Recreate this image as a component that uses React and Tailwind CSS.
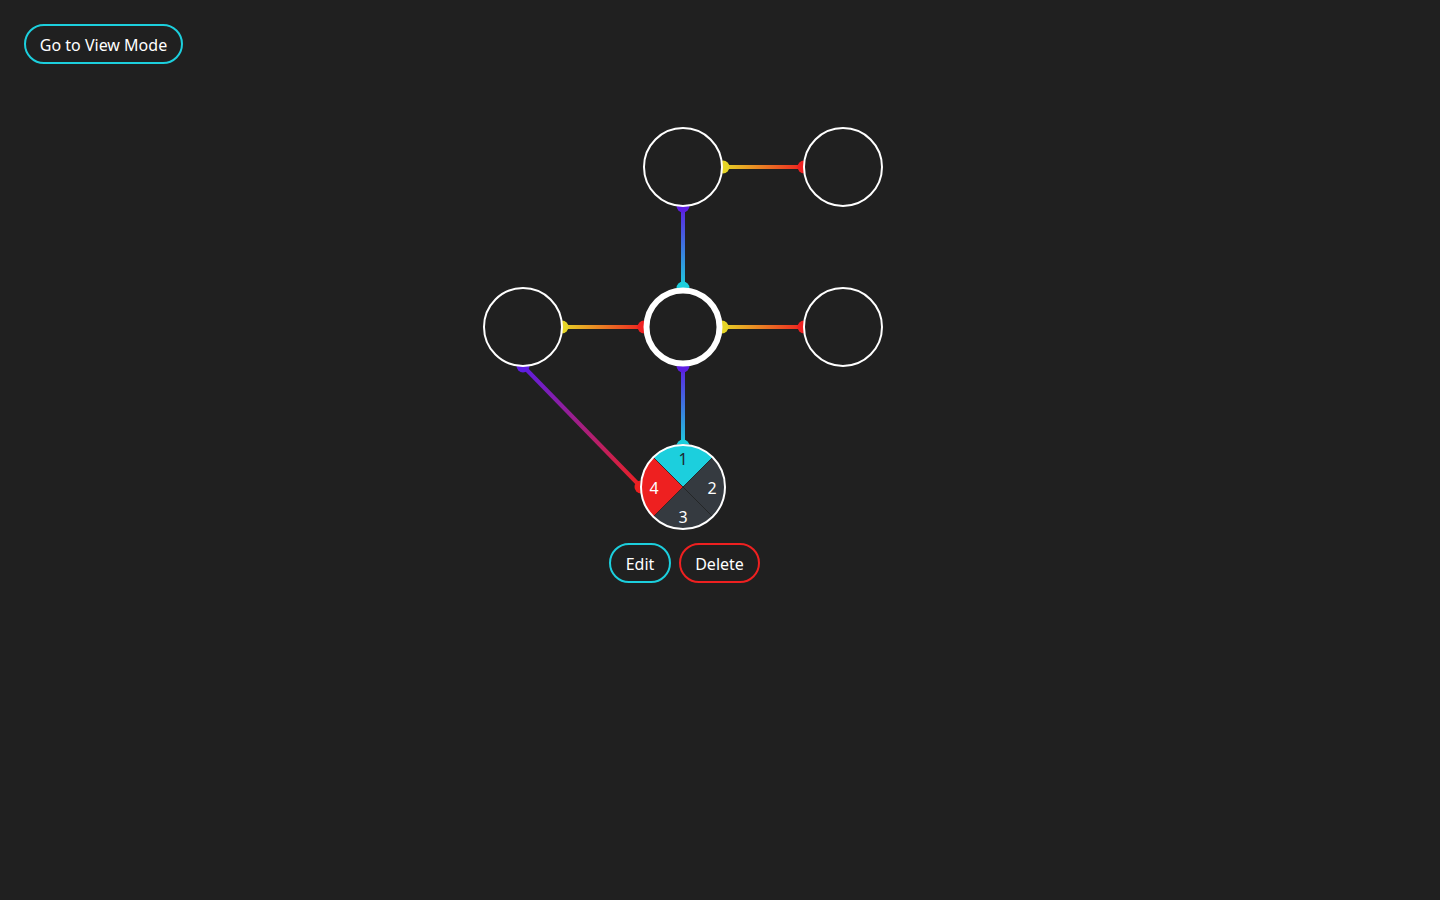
import React from 'react';

const CYAN = '#1ccfdd';
const RED = '#ee2020';
const YELLOW = '#e6d526';
const PURPLE = '#5d1de2';
const SLATE = '#353a40';
const BG = '#202020';
const FONT = '"Noto Sans", "Open Sans", sans-serif';

// plain nodes of the graph, centers in page px
const nodes = [
  { id: 'a', x: 683, y: 167 },
  { id: 'b', x: 843, y: 167 },
  { id: 'c', x: 523, y: 327 },
  { id: 'd', x: 843, y: 327 },
];

const edges = [
  { id: 'e1', x1: 723, y1: 167, x2: 804, y2: 167, from: YELLOW, to: RED },
  { id: 'e2', x1: 562, y1: 327, x2: 644, y2: 327, from: YELLOW, to: RED },
  { id: 'e3', x1: 722, y1: 327, x2: 804, y2: 327, from: YELLOW, to: RED },
  { id: 'e4', x1: 683, y1: 206, x2: 683, y2: 288, from: PURPLE, to: CYAN },
  { id: 'e5', x1: 683, y1: 366, x2: 683, y2: 446, from: PURPLE, to: CYAN },
  { id: 'e6', x1: 523, y1: 366, x2: 641, y2: 487, from: PURPLE, to: RED },
];

const Sectors = ({ cx, cy, r }) => {
  const d = Math.round(r * Math.SQRT1_2);
  const tl = `${cx - d},${cy - d}`;
  const tr = `${cx + d},${cy - d}`;
  const br = `${cx + d},${cy + d}`;
  const bl = `${cx - d},${cy + d}`;
  const arc = (p) => `A${r},${r} 0 0 1 ${p}`;

  return (
    <g fontFamily={FONT} fontSize="16" textAnchor="middle">
      <path d={`M${cx},${cy} L${tl} ${arc(tr)} Z`} fill={CYAN} stroke={BG} strokeWidth="0.6" />
      <path d={`M${cx},${cy} L${tr} ${arc(br)} Z`} fill={SLATE} stroke={BG} strokeWidth="0.6" />
      <path d={`M${cx},${cy} L${br} ${arc(bl)} Z`} fill={SLATE} stroke={BG} strokeWidth="0.6" />
      <path d={`M${cx},${cy} L${bl} ${arc(tl)} Z`} fill={RED} stroke={BG} strokeWidth="0.6" />
      <circle cx={cx} cy={cy} r={r} fill="none" stroke="#ffffff" strokeWidth="2" />
      <text x={cx} y={cy - 22} fill="#1e2a30">1</text>
      <text x={cx + 29} y={cy + 7} fill="#ffffff">2</text>
      <text x={cx} y={cy + 36} fill="#ffffff">3</text>
      <text x={cx - 29} y={cy + 7} fill="#ffffff">4</text>
    </g>
  );
};

export default function App() {
  return (
    <div className="relative w-full h-[900px] bg-[#202020] overflow-hidden text-white font-['Noto_Sans','Open_Sans',sans-serif]">
      <svg className="absolute inset-0 w-full h-full" width="1440" height="900">
        <defs>
          {edges.map((e) => (
            <linearGradient
              key={e.id}
              id={`g-${e.id}`}
              gradientUnits="userSpaceOnUse"
              x1={e.x1}
              y1={e.y1}
              x2={e.x2}
              y2={e.y2}
            >
              <stop offset="0" stopColor={e.from} />
              <stop offset="1" stopColor={e.to} />
            </linearGradient>
          ))}
        </defs>

        {edges.map((e) => (
          <g key={e.id}>
            <line x1={e.x1} y1={e.y1} x2={e.x2} y2={e.y2} stroke={`url(#g-${e.id})`} strokeWidth="4" />
            <circle cx={e.x1} cy={e.y1} r="6.5" fill={e.from} />
            <circle cx={e.x2} cy={e.y2} r="6.5" fill={e.to} />
          </g>
        ))}

        {nodes.map((n) => (
          <circle key={n.id} cx={n.x} cy={n.y} r="39" fill={BG} stroke="#ffffff" strokeWidth="2" />
        ))}

        {/* selected node */}
        <circle cx="683" cy="327" r="36.5" fill={BG} stroke="#ffffff" strokeWidth="6" />

        <Sectors cx={683} cy={487} r={42} />
      </svg>

      <div className="relative p-6">
        <button className="h-10 w-[159px] pt-0.5 rounded-full border-2 border-[#1ccfdd] text-base text-white flex items-center justify-center">
          Go to View Mode
        </button>
      </div>

      {/* node actions */}
      <div className="absolute left-[609px] top-[543px] flex gap-2">
        <button className="h-10 w-[62px] pt-0.5 rounded-full border-2 border-[#1ccfdd] text-base text-white flex items-center justify-center">
          Edit
        </button>
        <button className="h-10 w-[81px] pt-0.5 rounded-full border-2 border-[#ee2020] text-base text-white flex items-center justify-center">
          Delete
        </button>
      </div>
    </div>
  );
}
